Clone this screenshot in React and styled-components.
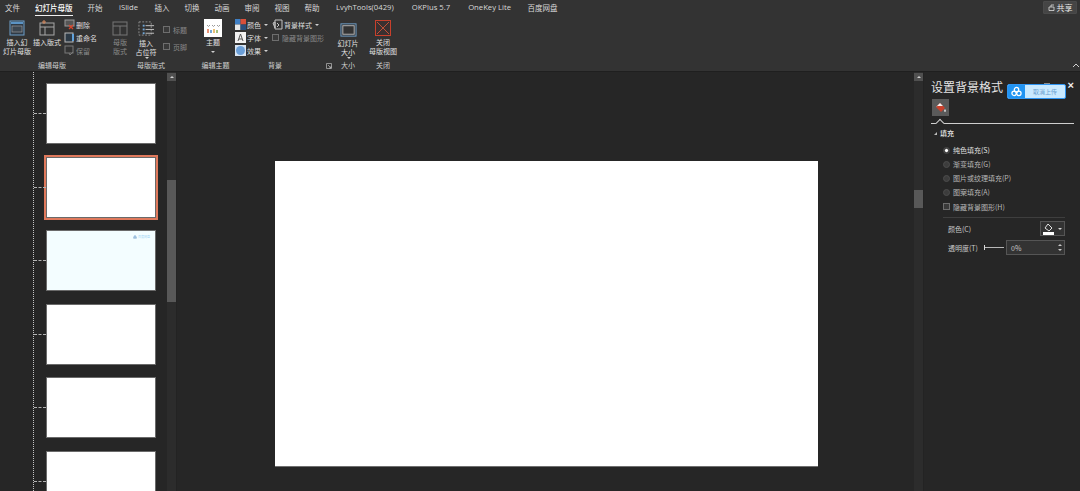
import React from 'react';
import styled, { createGlobalStyle } from 'styled-components';

const GlobalStyle = createGlobalStyle`
  html, body { margin: 0; padding: 0; background: #262626; }
  body { font-family: "Noto Sans CJK SC", "Noto Sans", sans-serif; }
  * { box-sizing: border-box; }
`;

const Page = styled.div`
  width: 1080px;
  height: 491px;
  display: flex;
  flex-direction: column;
  overflow: hidden;
  background: #262626;
  color: #dcdcdc;
`;

const Ribbon = styled.header`
  position: relative;
  height: 72px;
  flex: none;
  background: #333333;
  border-bottom: 1px solid #1f1f1f;
`;

const TabBar = styled.nav`
  height: 16px;
  display: flex;
  align-items: flex-start;
  gap: 15px;
  padding: 2px 0 0 5px;
`;

const Tab = styled.span`
  position: relative;
  margin: ${(p) => (p.$latin ? '0 1.5px' : '0')};
  font-size: ${(p) => (p.$latin ? '7.7px' : '7.5px')};
  line-height: 11px;
  white-space: nowrap;
  color: ${(p) => (p.$active ? '#ffffff' : '#d8d8d8')};
  font-family: ${(p) => (p.$latin ? '"Open Sans", "Noto Sans CJK SC", sans-serif' : 'inherit')};
  font-weight: ${(p) => (p.$active ? 500 : 400)};
  &::after {
    content: '';
    display: ${(p) => (p.$active ? 'block' : 'none')};
    position: absolute;
    left: 0;
    right: 0;
    bottom: -3px;
    height: 1px;
    background: #f0f0f0;
  }
`;

const ShareButton = styled.button`
  position: absolute;
  top: 1px;
  right: 3px;
  width: 34px;
  height: 13px;
  display: flex;
  align-items: center;
  justify-content: center;
  gap: 2px;
  padding: 0;
  border: 1px solid #4a4a4a;
  border-radius: 1px;
  background: #454545;
  color: #e8e8e8;
  font: 8px "Noto Sans CJK SC", sans-serif;
`;

const Collapse = styled.span`
  position: absolute;
  right: 1px;
  bottom: 2px;
  width: 6px;
  height: 6px;
  display: flex;
`;

const RibbonBody = styled.div`
  height: 55px;
  display: flex;
`;

const Group = styled.section`
  position: relative;
  width: ${(p) => p.$w}px;
  flex: none;
  display: flex;
  flex-direction: column;
`;

const GroupContent = styled.div`
  height: 43px;
  display: flex;
  padding-left: ${(p) => p.$pad || 0}px;
`;

const GroupLabel = styled.div`
  height: 12px;
  font-size: 7px;
  line-height: 12px;
  color: #cfcfcf;
  white-space: nowrap;
  padding-left: ${(p) => p.$pad || 0}px;
  text-align: ${(p) => (p.$pad ? 'left' : 'center')};
`;

const Launcher = styled.span`
  position: absolute;
  right: 2px;
  bottom: 2px;
  width: 6px;
  height: 6px;
  display: flex;
`;

const BigButton = styled.div`
  width: ${(p) => p.$w || 30}px;
  flex: none;
  display: flex;
  flex-direction: column;
  align-items: center;
  padding-top: ${(p) => p.$top ?? 4}px;
  font-size: 7px;
  line-height: 9px;
  text-align: center;
  color: ${(p) => (p.$off ? '#8a8a8a' : '#e2e2e2')};
  white-space: nowrap;
`;

const BigIcon = styled.svg`
  display: block;
  width: ${(p) => p.$s || 16}px;
  height: ${(p) => p.$s || 16}px;
  margin-bottom: ${(p) => p.$gap ?? 2}px;
  flex: none;
`;

const SmallColumn = styled.div`
  display: flex;
  flex-direction: column;
  padding-top: ${(p) => p.$top || 2}px;
  gap: ${(p) => p.$gap || 0}px;
  margin-left: ${(p) => p.$left || 0}px;
`;

const SmallRow = styled.div`
  height: 13px;
  display: flex;
  align-items: center;
  gap: 1px;
  font-size: 7px;
  white-space: nowrap;
  color: ${(p) => (p.$off ? '#8a8a8a' : '#dedede')};
`;

const CheckRow = styled(SmallRow)`
  gap: 3px;
`;

const SmallIcon = styled.svg`
  width: 11px;
  height: 11px;
  flex: none;
`;

const Check = styled.span`
  width: 7px;
  height: 7px;
  flex: none;
  background: #3a3a3a;
  border: 1px solid #6e6e6e;
`;

const Caret = styled.span`
  display: inline-block;
  width: 0;
  height: 0;
  margin-left: 2px;
  vertical-align: middle;
  border-left: 2px solid transparent;
  border-right: 2px solid transparent;
  border-top: 2px solid #d0d0d0;
`;

const ThemeCaret = styled(Caret)`
  margin: 4px 0 0;
`;

const Main = styled.main`
  flex: 1;
  min-height: 0;
  display: flex;
`;

const ThumbPane = styled.aside`
  width: 167px;
  flex: none;
  padding-left: 33px;
  overflow: hidden;
`;

const ThumbList = styled.div`
  display: flex;
  flex-direction: column;
  gap: 12.5px;
  padding: 11px 0 0 12px;
  height: 100%;
  border-left: 1px dotted #c4c4c4;
`;

const Thumb = styled.div`
  position: relative;
  width: 110px;
  height: 61px;
  flex: none;
  display: flex;
  justify-content: flex-end;
  background: ${(p) => (p.$tint ? '#f3fdff' : '#ffffff')};
  border: 1px solid #6a6a6a;
  outline: ${(p) => (p.$selected ? '2px solid #e0795c' : 'none')};
  &::before {
    content: '';
    position: absolute;
    left: -13px;
    top: 29px;
    width: 12px;
    border-top: 1px dashed #b4b4b4;
  }
`;

const ThumbLogo = styled.div`
  display: flex;
  align-items: center;
  gap: 1px;
  height: 4px;
  margin: 4px 5px 0 0;
  font-size: 3px;
  line-height: 4px;
  color: #a9d8f5;
`;

const ScrollTrack = styled.div`
  width: 10px;
  flex: none;
  display: flex;
  flex-direction: column;
  padding-top: 1px;
  background: #2c2c2c;
  border-right: 1px solid #232323;
`;

const ScrollUp = styled.span`
  width: 9px;
  height: 8px;
  flex: none;
  display: flex;
  align-items: center;
  justify-content: center;
  background: #505050;
  &::before {
    content: '';
    border-left: 2px solid transparent;
    border-right: 2px solid transparent;
    border-bottom: 2px solid #cfcfcf;
  }
`;

const ScrollThumb = styled.span`
  width: 9px;
  height: ${(p) => p.$h}px;
  margin-top: ${(p) => p.$top}px;
  flex: none;
  background: #585858;
`;

const Stage = styled.div`
  flex: 1;
  display: flex;
  justify-content: center;
  padding: 89px 0 0 2px;
  background: #262626;
`;

const Slide = styled.div`
  width: 543px;
  height: 306px;
  background: #ffffff;
  border: 1px solid #6f6f6f;
  border-width: 0 0 1px;
`;

const FormatPane = styled.aside`
  position: relative;
  width: 156px;
  flex: none;
  padding: 7px 14px 0 7px;
  background: #262626;
`;

const PaneTitle = styled.h2`
  margin: 0;
  height: 18px;
  font-size: 12px;
  line-height: 15px;
  font-weight: 400;
  color: #e4e4e4;
  white-space: nowrap;
`;

const PaneMenu = styled.span`
  position: absolute;
  top: 11px;
  left: 120px;
  width: 6px;
  height: 2px;
  background: #8c8c8c;
`;

const Badge = styled.div`
  position: absolute;
  top: 12px;
  left: 83px;
  width: 59px;
  height: 15px;
  display: flex;
  border: 1px solid #2f95f2;
  border-radius: 2px;
  overflow: hidden;
  background: #c9e9ff;
`;

const BadgeIcon = styled.span`
  width: 17px;
  flex: none;
  display: flex;
  align-items: center;
  justify-content: center;
  background: #2094f3;
`;

const BadgeText = styled.span`
  flex: 1;
  font-size: 6px;
  line-height: 13px;
  text-align: center;
  color: #6a9fd0;
`;

const PaneClose = styled.span`
  position: absolute;
  top: 8px;
  right: 6px;
  font: 700 11px/10px "Liberation Sans", sans-serif;
  color: #f0f0f0;
`;

const FillTab = styled.div`
  width: 17px;
  height: 17px;
  margin: 2px 0 0 1px;
  display: flex;
  align-items: center;
  justify-content: center;
  background: #5a5a5a;
`;

const NotchLine = styled.div`
  position: relative;
  height: 1px;
  margin: 7px -8px 0 0;
  background: #cfcfcf;
  &::after {
    content: '';
    position: absolute;
    left: 6px;
    top: -3px;
    width: 5px;
    height: 5px;
    background: #262626;
    border-left: 1px solid #cfcfcf;
    border-top: 1px solid #cfcfcf;
    transform: rotate(45deg);
  }
`;

const SectionHead = styled.div`
  display: flex;
  align-items: center;
  gap: 3px;
  height: 12px;
  margin: 3px 0 4px 3px;
  font-size: 7px;
  font-weight: 500;
  color: #e2e2e2;
  &::before {
    content: '';
    width: 0;
    height: 0;
    border-left: 3px solid transparent;
    border-bottom: 3px solid #bdbdbd;
  }
`;

const OptionList = styled.div`
  display: flex;
  flex-direction: column;
  padding-left: 12px;
`;

const Option = styled.div`
  height: ${(p) => p.$h || 14}px;
  display: flex;
  align-items: center;
  gap: 3px;
  font-size: 7px;
  white-space: nowrap;
  color: ${(p) => (p.$on ? '#e0e0e0' : '#b8b8b8')};
`;

const Radio = styled.span`
  width: 7px;
  height: 7px;
  flex: none;
  border-radius: 50%;
  background: ${(p) => (p.$on ? 'radial-gradient(circle, #ffffff 0 1px, #3c3c3c 2.2px)' : '#3c3c3c')};
  border: 1px solid #4c4c4c;
`;

const PaneRule = styled.div`
  height: 1px;
  margin: 3px 1px 0 12px;
  background: #3e3e3e;
`;

const FieldRow = styled.div`
  display: flex;
  align-items: center;
  height: ${(p) => p.$h}px;
  margin: ${(p) => p.$mt}px 1px 0 17px;
  font-size: 7px;
  color: #c8c8c8;
  white-space: nowrap;
`;

const ColorPick = styled.span`
  width: 25px;
  height: 15px;
  margin-left: auto;
  display: flex;
  align-items: center;
  justify-content: center;
  gap: 2px;
  background: #333333;
  border: 1px solid #555555;
`;

const SliderTrack = styled.span`
  position: relative;
  width: 20px;
  height: 1px;
  margin-left: 6px;
  background: #b8b8b8;
  &::before {
    content: '';
    position: absolute;
    left: 0;
    top: -2px;
    width: 1px;
    height: 5px;
    background: #d8d8d8;
  }
`;

const Spinner = styled.span`
  width: 59px;
  height: 15px;
  margin-left: auto;
  display: flex;
  align-items: center;
  justify-content: space-between;
  padding: 0 2px 0 4px;
  background: #333333;
  border: 1px solid #555555;
`;

const SpinArrows = styled.span`
  display: flex;
  flex-direction: column;
  gap: 3px;
  &::before, &::after {
    content: '';
    border-left: 2px solid transparent;
    border-right: 2px solid transparent;
  }
  &::before { border-bottom: 2px solid #c8c8c8; }
  &::after { border-top: 2px solid #c8c8c8; }
`;

const MasterIcon = () => (
  <BigIcon viewBox="0 0 16 16">
    <rect x="1" y="1" width="14" height="14" fill="#2f3a46" stroke="#6f9fc9" />
    <rect x="2" y="2" width="12" height="2" fill="#5b93c4" />
    <rect x="3" y="6" width="10" height="6" fill="#3c4650" stroke="#9a9a9a" strokeWidth=".7" />
  </BigIcon>
);

const LayoutIcon = () => (
  <BigIcon viewBox="0 0 16 16">
    <rect x="1" y="3" width="14" height="12" fill="none" stroke="#a8a8a8" />
    <path d="M1 7h14M6 7v8" stroke="#a8a8a8" />
    <path d="M5 0v4M3 2h4" stroke="#d88a5e" />
  </BigIcon>
);

const DisabledLayoutIcon = () => (
  <BigIcon viewBox="0 0 16 16">
    <rect x="1" y="2" width="14" height="13" fill="none" stroke="#777777" />
    <path d="M1 6h14M8 6v9" stroke="#777777" />
  </BigIcon>
);

const PlaceholderIcon = () => (
  <BigIcon viewBox="0 0 18 16" $s={17}>
    <rect x="1" y="1" width="13" height="14" fill="none" stroke="#8f8f8f" strokeDasharray="2 1.5" />
    <rect x="5" y="4" width="2" height="2" fill="#6fa6d6" />
    <rect x="5" y="8" width="2" height="2" fill="#6fa6d6" />
    <rect x="5" y="12" width="2" height="2" fill="#6fa6d6" />
    <path d="M8 5h9M8 9h9M8 13h9" stroke="#c8c8c8" />
  </BigIcon>
);

const ThemeIcon = () => (
  <BigIcon viewBox="0 0 18 18" $s={18} $gap={1}>
    <rect width="18" height="18" fill="#ffffff" />
    <path d="M3 6l1.500 1.500L6 6M8 6l1.500 1.500L11 6M13 6l1.500 1.500L16 6" fill="none" stroke="#9a9a9a" />
    <path d="M4 14v-4" stroke="#e0663c" strokeWidth="1.400" />
    <path d="M7 14v-3" stroke="#3f86c8" strokeWidth="1.400" />
    <path d="M10 14v-4" stroke="#e0a43c" strokeWidth="1.400" />
    <path d="M13 14v-3" stroke="#7aa84a" strokeWidth="1.400" />
  </BigIcon>
);

const SizeIcon = () => (
  <BigIcon viewBox="0 0 18 16" $s={17} $gap={1}>
    <rect x="1" y="2" width="16" height="13" fill="none" stroke="#6f9fc9" />
    <rect x="3" y="4" width="12" height="9" fill="#333333" stroke="#b8b8b8" />
  </BigIcon>
);

const CloseIcon = () => (
  <BigIcon viewBox="0 0 16 16">
    <rect x=".5" y=".5" width="15" height="15" fill="#3a3030" stroke="#c8402c" />
    <path d="M2 2l12 12M14 2L2 14" stroke="#c05038" />
  </BigIcon>
);

const DeleteIcon = () => (
  <SmallIcon viewBox="0 0 11 11">
    <rect x="1" y="1" width="9" height="6" fill="#555555" stroke="#9a9a9a" />
    <path d="M5 6l4 4M9 6l-4 4" stroke="#d8452c" strokeWidth="1.300" />
  </SmallIcon>
);

const RenameIcon = () => (
  <SmallIcon viewBox="0 0 11 11">
    <rect x="1" y="1" width="8" height="9" fill="#2d3a46" stroke="#b8b8b8" />
    <path d="M9 2v7" stroke="#5fa2dc" strokeWidth="2" />
  </SmallIcon>
);

const KeepIcon = () => (
  <SmallIcon viewBox="0 0 11 11">
    <rect x="1" y="1" width="8" height="7" fill="none" stroke="#7a7a7a" />
    <path d="M5 8l1 2 3-3" fill="none" stroke="#7a7a7a" />
  </SmallIcon>
);

const PaletteIcon = () => (
  <SmallIcon viewBox="0 0 11 11">
    <rect width="5.500" height="5.500" fill="#3f7fc4" />
    <rect x="5.500" width="5.500" height="5.500" fill="#d9503a" />
    <rect y="5.500" width="5.500" height="5.500" fill="#e8e8e8" />
    <rect x="5.500" y="5.500" width="5.500" height="5.500" fill="#2b4f7c" />
  </SmallIcon>
);

const FontIcon = () => (
  <SmallIcon viewBox="0 0 11 11">
    <rect width="11" height="11" fill="#f2f2f2" />
    <path d="M3 9l2.500-7L8 9M4 7h3" fill="none" stroke="#555555" />
  </SmallIcon>
);

const EffectIcon = () => (
  <SmallIcon viewBox="0 0 11 11">
    <rect width="11" height="11" fill="#d8e4f2" />
    <circle cx="5.500" cy="5.500" r="4.500" fill="#6b9fd8" />
  </SmallIcon>
);

const BgStyleIcon = () => (
  <SmallIcon viewBox="0 0 11 11">
    <path d="M3 1h7v9H3zM1 4l2-1v6z" fill="none" stroke="#c4c4c4" />
    <path d="M5 4l2 2-2 2" fill="none" stroke="#c4c4c4" />
  </SmallIcon>
);

const CloudIcon = ({ size = 12, color = '#ffffff' }) => (
  <svg width={size} height={size} viewBox="0 0 12 12">
    <circle cx="6" cy="4" r="2.400" fill="none" stroke={color} strokeWidth="1.400" />
    <circle cx="3.400" cy="8" r="2.400" fill="none" stroke={color} strokeWidth="1.400" />
    <circle cx="8.600" cy="8" r="2.400" fill="none" stroke={color} strokeWidth="1.400" />
  </svg>
);

const tabs = [
  { label: '文件' },
  { label: '幻灯片母版', active: true },
  { label: '开始' },
  { label: 'iSlide', latin: true },
  { label: '插入' },
  { label: '切换' },
  { label: '动画' },
  { label: '审阅' },
  { label: '视图' },
  { label: '帮助' },
  { label: 'LvyhTools(0429)', latin: true },
  { label: 'OKPlus 5.7', latin: true },
  { label: 'OneKey Lite', latin: true },
  { label: '百度网盘' },
];

const thumbs = [{}, { selected: true }, { tint: true, logo: true }, {}, {}, {}];

const fillOptions = [
  { label: '纯色填充(S)', on: true },
  { label: '渐变填充(G)' },
  { label: '图片或纹理填充(P)' },
  { label: '图案填充(A)' },
];

const App = () => (
  <Page>
    <GlobalStyle />
    <Ribbon>
      <TabBar>
        {tabs.map((t) => (
          <Tab key={t.label} $active={t.active} $latin={t.latin}>{t.label}</Tab>
        ))}
      </TabBar>
      <ShareButton>
        <svg width="7" height="7" viewBox="0 0 7 7">
          <path d="M1 3h5v3.500H1zM3 3V1h3" fill="none" stroke="#dddddd" strokeWidth=".8" />
        </svg>
        共享
      </ShareButton>
      <Collapse>
        <svg width="6" height="6" viewBox="0 0 6 6">
          <path d="M0 4l3-3 3 3" fill="none" stroke="#d0d0d0" />
        </svg>
      </Collapse>
      <RibbonBody>
        <Group $w={104}>
          <GroupContent $pad={2}>
            <BigButton><MasterIcon />插入幻<br />灯片母版</BigButton>
            <BigButton><LayoutIcon />插入版式</BigButton>
            <SmallColumn $left={2}>
              <SmallRow><DeleteIcon />删除</SmallRow>
              <SmallRow><RenameIcon />重命名</SmallRow>
              <SmallRow $off><KeepIcon />保留</SmallRow>
            </SmallColumn>
          </GroupContent>
          <GroupLabel>编辑母版</GroupLabel>
        </Group>
        <Group $w={94}>
          <GroupContent $pad={2}>
            <BigButton $off $w={28}><DisabledLayoutIcon />母版<br />版式</BigButton>
            <BigButton $w={24}><PlaceholderIcon />插入<br />占位符<Caret /></BigButton>
            <SmallColumn $left={5} $top={7} $gap={4}>
              <CheckRow $off><Check />标题</CheckRow>
              <CheckRow $off><Check />页脚</CheckRow>
            </SmallColumn>
          </GroupContent>
          <GroupLabel>母版版式</GroupLabel>
        </Group>
        <Group $w={35}>
          <GroupContent $pad={5}>
            <BigButton $w={20} $top={3}><ThemeIcon />主题<ThemeCaret /></BigButton>
          </GroupContent>
          <GroupLabel>编辑主题</GroupLabel>
        </Group>
        <Group $w={101}>
          <GroupContent $pad={2}>
            <SmallColumn $top={2}>
              <SmallRow><PaletteIcon />颜色<Caret /></SmallRow>
              <SmallRow><FontIcon />字体<Caret /></SmallRow>
              <SmallRow><EffectIcon />效果<Caret /></SmallRow>
            </SmallColumn>
            <SmallColumn $left={4} $top={2}>
              <SmallRow><BgStyleIcon />背景样式<Caret /></SmallRow>
              <CheckRow $off><Check />隐藏背景图形</CheckRow>
            </SmallColumn>
          </GroupContent>
          <GroupLabel $pad={35}>背景</GroupLabel>
          <Launcher>
            <svg width="6" height="6" viewBox="0 0 6 6">
              <path d="M.5.500h5v5h-5zM2 2l3 3M5 3v2H3" fill="none" stroke="#bbbbbb" strokeWidth=".7" />
            </svg>
          </Launcher>
        </Group>
        <Group $w={32}>
          <GroupContent $pad={0}>
            <BigButton $w={28} $top={5}><SizeIcon />幻灯片<br />大小<Caret /></BigButton>
          </GroupContent>
          <GroupLabel $pad={7}>大小</GroupLabel>
        </Group>
        <Group $w={34}>
          <GroupContent $pad={2}>
            <BigButton $w={30}><CloseIcon />关闭<br />母版视图</BigButton>
          </GroupContent>
          <GroupLabel>关闭</GroupLabel>
        </Group>
      </RibbonBody>
    </Ribbon>
    <Main>
      <ThumbPane>
        <ThumbList>
          {thumbs.map((t, i) => (
            <Thumb key={i} $selected={t.selected} $tint={t.tint}>
              {t.logo && (
                <ThumbLogo>
                  <CloudIcon size={4} color="#5b8fc4" />
                  百度网盘
                </ThumbLogo>
              )}
            </Thumb>
          ))}
        </ThumbList>
      </ThumbPane>
      <ScrollTrack>
        <ScrollUp />
        <ScrollThumb $top={99} $h={122} />
      </ScrollTrack>
      <Stage>
        <Slide />
      </Stage>
      <ScrollTrack>
        <ScrollUp />
        <ScrollThumb $top={109} $h={18} />
      </ScrollTrack>
      <FormatPane>
        <PaneTitle>设置背景格式</PaneTitle>
        <PaneMenu />
        <Badge>
          <BadgeIcon><CloudIcon size={11} /></BadgeIcon>
          <BadgeText>取消上传</BadgeText>
        </Badge>
        <PaneClose>×</PaneClose>
        <FillTab>
          <svg width="13" height="13" viewBox="0 0 13 13">
            <path d="M2 6l4-4 5 5-4 4z" fill="#c8402c" />
            <path d="M2 6l4-4 3 3H3.500z" fill="#f2f2f2" />
            <path d="M11 8c1 1.500 1 2.500 0 3-1-.5-1-1.500 0-3z" fill="#ffffff" />
          </svg>
        </FillTab>
        <NotchLine />
        <SectionHead>填充</SectionHead>
        <OptionList>
          {fillOptions.map((o) => (
            <Option key={o.label} $on={o.on}>
              <Radio $on={o.on} />
              {o.label}
            </Option>
          ))}
          <Option $h={15}>
            <Check />
            隐藏背景图形(H)
          </Option>
        </OptionList>
        <PaneRule />
        <FieldRow $h={15} $mt={3}>
          颜色(C)
          <ColorPick>
            <svg width="11" height="12" viewBox="0 0 11 12">
              <path d="M5 1l4 4-3 3-4-3z" fill="none" stroke="#e0e0e0" />
              <rect x="0" y="9" width="11" height="3" fill="#ffffff" />
            </svg>
            <Caret />
          </ColorPick>
        </FieldRow>
        <FieldRow $h={15} $mt={4}>
          透明度(T)
          <SliderTrack />
          <Spinner>
            0%
            <SpinArrows />
          </Spinner>
        </FieldRow>
      </FormatPane>
    </Main>
  </Page>
);

export default App;
